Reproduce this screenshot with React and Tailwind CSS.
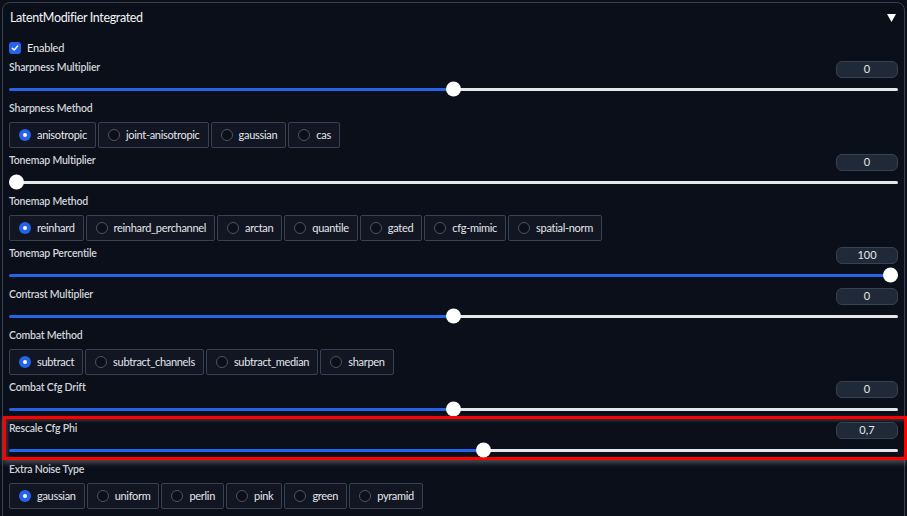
const FONT = { fontFamily: "Lato, 'Noto Sans', sans-serif" };

const Label = ({ children }) => (
    <span className="block text-[10.5px] font-semibold tracking-[-0.2px] text-[#d1d5db] leading-[13px]">{children}</span>
);

function Slider({ label, value, pos, highlight }) {
    return (
        <div className="relative h-[35px]">
            {highlight && (
                <div className="absolute -left-[6px] -right-[9px] -top-[6px] -bottom-[3px] border-[3px] border-[#ff0000] shadow-[0_3px_5px_rgba(120,120,120,0.6),inset_2px_2px_3px_rgba(90,90,90,0.5)] pointer-events-none" />
            )}
            <div className="flex items-start justify-between h-[17px]">
                <Label>{label}</Label>
                <div className="w-[62px] h-[17px] rounded-md border border-[#374151] bg-[#1f2937] flex items-center justify-center text-[11px] text-[#e5e7eb]">
                    {value}
                </div>
            </div>
            <div className="relative mt-[4px] h-[14px] flex items-center">
                <div className="flex w-full h-[3px] rounded-full overflow-hidden">
                    <div className="h-full bg-[#2563eb]" style={{ width: `calc(7px + (100% - 14px) * ${pos})` }} />
                    <div className="h-full flex-1 bg-[#e5e7eb]" />
                </div>
                <div className="absolute top-1/2 -translate-y-1/2 w-[15px] h-[15px] rounded-full bg-white"
                    style={{ left: `calc((100% - 15px) * ${pos})` }} />
            </div>
        </div>
    );
}

function Radios({ label, options }) {
    return (
        <div className="flex flex-col">
            <div className="h-[13px] flex items-center"><Label>{label}</Label></div>
            <div className="flex gap-[2px] mt-[7px]">
                {options.map((o, i) => (
                    <div key={o} className="h-[26px] flex items-center gap-[6px] pl-[9px] pr-[8px] border border-[#374151] bg-[#111622] rounded-[2px] text-[11px] tracking-[-0.3px] text-[#e5e7eb]">
                        {i === 0 ? (
                            <span className="w-[12px] h-[12px] rounded-full bg-[#2563eb] flex items-center justify-center">
                                <span className="w-[4px] h-[4px] rounded-full bg-white" />
                            </span>
                        ) : (
                            <span className="w-[12px] h-[12px] rounded-full border border-[#4b5563] bg-[#0b0f19]" />
                        )}
                        {o}
                    </div>
                ))}
            </div>
        </div>
    );
}

export default function App() {
    return (
        <div className="w-[907px] h-[516px] overflow-hidden bg-[#0b0f19] pt-[2px] pl-[2px]" style={FONT}>
            <div className="w-[903px] h-[540px] border border-[#374151] rounded-lg px-[6px] pt-[6px]">

                {/* Header */}
                <div className="flex items-center justify-between h-[18px] pl-[1px]">
                    <span className="text-[12.5px] tracking-[-0.35px] text-[#f3f4f6]">LatentModifier Integrated</span>
                    <svg width="9" height="8" viewBox="0 0 9 8" className="mr-[2px]">
                        <polygon points="0,0 9,0 4.5,8" fill="#ffffff" />
                    </svg>
                </div>

                <div className="flex flex-col gap-[6px] mt-[14px]">
                    <div className="flex items-center gap-[6px] h-[14px]">
                        <span className="w-[12px] h-[12px] rounded-[3px] bg-[#2563eb] flex items-center justify-center">
                            <svg width="8" height="8" viewBox="0 0 8 8">
                                <path d="M1.3 4.2 L3.2 6 L6.7 2" stroke="white" strokeWidth="1.4" fill="none" strokeLinecap="round" strokeLinejoin="round" />
                            </svg>
                        </span>
                        <span className="text-[11px] tracking-[-0.2px] text-[#e5e7eb]">Enabled</span>
                    </div>

                    <Slider label="Sharpness Multiplier" value="0" pos={0.5} />
                    <Radios label="Sharpness Method" options={["anisotropic", "joint-anisotropic", "gaussian", "cas"]} />
                    <Slider label="Tonemap Multiplier" value="0" pos={0} />
                    <Radios label="Tonemap Method" options={["reinhard", "reinhard_perchannel", "arctan", "quantile", "gated", "cfg-mimic", "spatial-norm"]} />
                    <Slider label="Tonemap Percentile" value="100" pos={1} />
                    <Slider label="Contrast Multiplier" value="0" pos={0.5} />
                    <Radios label="Combat Method" options={["subtract", "subtract_channels", "subtract_median", "sharpen"]} />
                    <Slider label="Combat Cfg Drift" value="0" pos={0.5} />
                    <Slider label="Rescale Cfg Phi" value="0,7" pos={0.534} highlight />
                    <Radios label="Extra Noise Type" options={["gaussian", "uniform", "perlin", "pink", "green", "pyramid"]} />
                </div>
            </div>
        </div>
    );
}
